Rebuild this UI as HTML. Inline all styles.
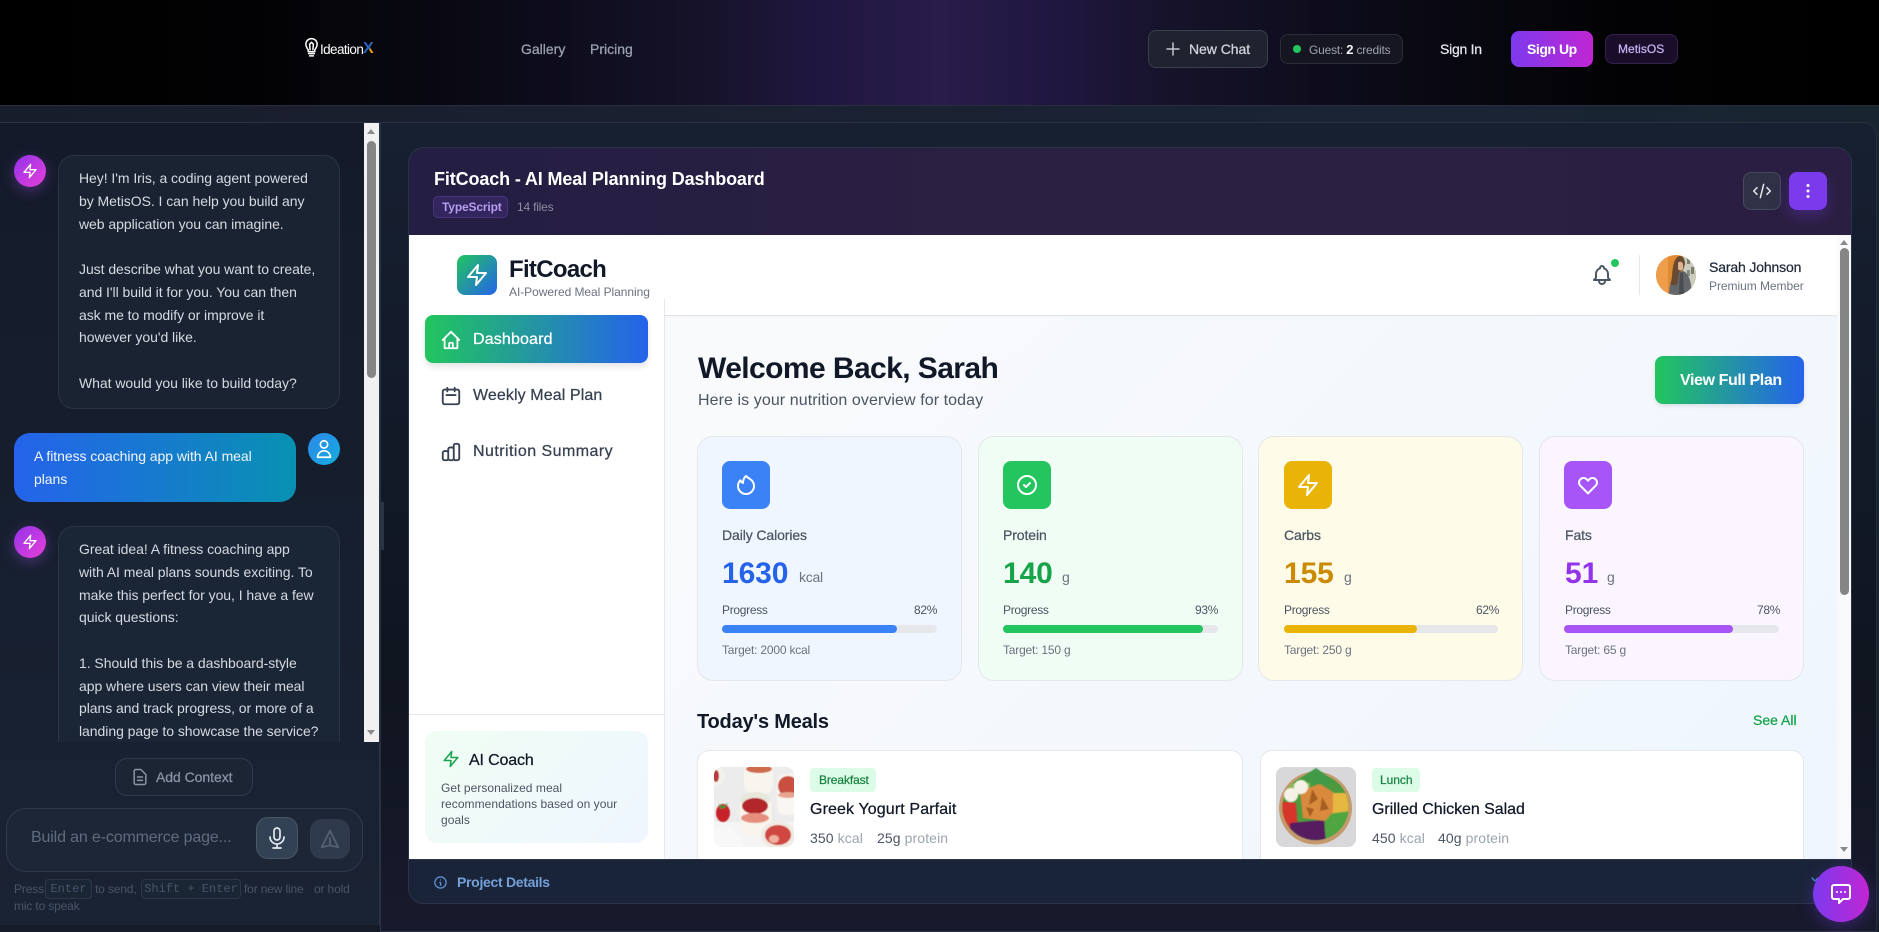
<!DOCTYPE html>
<html lang="en"><head><meta charset="utf-8"><title>FitCoach</title>
<style>
*{box-sizing:border-box;margin:0;padding:0}
html,body{width:1879px;height:925px;overflow:hidden;background:#161c2a;font-family:"Liberation Sans",sans-serif}
.a{position:absolute}
.t{position:absolute;white-space:nowrap;line-height:20px;letter-spacing:-.25px}
.w{-webkit-text-stroke:.25px currentColor}
svg{position:absolute;fill:none;stroke:currentColor;stroke-width:2;stroke-linecap:round;stroke-linejoin:round}
.m{font-size:14px;color:#d5dae2;line-height:22.75px;letter-spacing:-.05px;position:absolute;left:79px;white-space:pre}
.card{position:absolute;top:436px;height:245px;width:265px;border-radius:16px;border:1px solid #e5e7eb}
.ic{position:absolute;top:461px;width:48px;height:48px;border-radius:8px}
.lab{font-size:14px;color:#4b5563;top:525px;letter-spacing:-.1px;-webkit-text-stroke:.25px currentColor}
.val{font-size:30px;font-weight:700;top:564px;letter-spacing:-.1px}
.unit{font-size:14px;color:#6b7280;top:567px}
.s{font-size:12px;color:#4b5563;letter-spacing:-.3px}
.tg{font-size:12px;color:#6b7280;letter-spacing:-.2px;top:640px}
.track{position:absolute;top:625px;height:8px;border-radius:4px;background:#e5e7eb}
.fill{position:absolute;left:0;top:0;height:8px;border-radius:4px}
.kbd{position:absolute;top:879px;height:20px;border:1px solid #2c3747;border-radius:4px;background:#1b2635;font:12px/18px "Liberation Mono",monospace;color:#475569;text-align:center}
.nav{font-size:16px;color:#374151;left:473px;-webkit-text-stroke:.25px currentColor}
.h{font-size:12px;color:#475569;letter-spacing:-.15px}
</style></head><body>

<!-- top bar -->
<div class="a" style="left:0;top:0;width:1879px;height:105px;background:linear-gradient(90deg,#000 0,#020204 13%,#06060c 19%,#0b0a16 26%,#100e20 32%,#17132b 38%,#201741 44%,#281c4a 50%,#201741 56%,#17132b 62%,#100e20 68%,#0b0a16 74%,#06060c 81%,#020204 87%,#000 100%)"></div>
<div class="a" style="left:0;top:105px;width:1879px;height:1px;background:#2a2d3e"></div>

<!-- logo -->
<svg style="left:304px;top:36px;color:#fff;stroke-width:1.6" width="15" height="22" viewBox="0 0 16 22"><path d="M4.5 14C3 12 2 10.500 2 8a6 6 0 0 1 12 0c0 2.500-1 4-2.500 6v2h-7zM5 18h6M6 20.500h4M6.500 14 6 8M9.500 14 10 8M6 8l2-2 2 2"/></svg>
<div class="t" style="left:320px;top:40px;font-size:13.500px;color:#fff;letter-spacing:-.6px">Ideation</div>
<div class="t" style="left:363px;top:39px;font-size:16px;font-weight:700;letter-spacing:0;background:linear-gradient(115deg,#2563c8 0 52%,#f59e0b 60%);-webkit-background-clip:text;background-clip:text;color:transparent">X</div>

<div class="t w" style="left:521px;top:39px;font-size:14px;color:#9ca3af;letter-spacing:0">Gallery</div>
<div class="t w" style="left:590px;top:39px;font-size:14px;color:#9ca3af;letter-spacing:0">Pricing</div>

<div class="a" style="left:1148px;top:30px;width:120px;height:38px;border-radius:8px;border:1px solid #3a3f4e;background:#20222f"></div>
<svg style="left:1165px;top:41px;color:#c3c6ce;stroke-width:1.500" width="16" height="16" viewBox="0 0 16 16"><path d="M8 2v12M2 8h12"/></svg>
<div class="t w" style="left:1189px;top:39px;font-size:14px;color:#d1d5db;letter-spacing:-.05px">New Chat</div>

<div class="a" style="left:1280px;top:34px;width:123px;height:30px;border-radius:8px;border:1px solid #2a2d3a;background:#151622"></div>
<div class="a" style="left:1293px;top:45px;width:8px;height:8px;border-radius:50%;background:#22c55e"></div>
<div class="t" style="left:1309px;top:40px;font-size:12px;color:#9ca3af;letter-spacing:-.2px">Guest: <b style="color:#f3f4f6;font-size:13px">2</b> credits</div>

<div class="t w" style="left:1440px;top:39px;font-size:14px;color:#e5e7eb">Sign In</div>
<div class="a" style="left:1511px;top:31px;width:82px;height:36px;border-radius:8px;background:linear-gradient(90deg,#7c3aed,#c026d3)"></div>
<div class="t" style="left:1527px;top:39px;font-size:14px;font-weight:700;color:#fff;letter-spacing:-.45px">Sign Up</div>
<div class="a" style="left:1605px;top:34px;width:73px;height:30px;border-radius:8px;border:1px solid #34214f;background:#1a0d2a"></div>
<div class="t w" style="left:1618px;top:39px;font-size:12px;color:#c4b0f0;letter-spacing:.05px">MetisOS</div>

<!-- body bg -->
<div class="a" style="left:0;top:106px;width:1879px;height:819px;background:linear-gradient(90deg,#181d2b,#1b2030 30%,#1a2435 75%,#18252f)"></div>

<!-- right panel outer -->
<div class="a" style="left:380px;top:122px;width:1497px;height:810px;border:1px solid #2a3142;border-right-color:#262d3c;border-radius:0 14px 0 0;background:linear-gradient(180deg,#172031 0,#121a28 40%,#10151f 70%,#171a2c 100%)"></div>

<!-- left panel -->
<div class="a" style="left:0;top:122px;width:380px;height:803px;background:linear-gradient(180deg,#141a29 0,#172030 60%,#1a2333 100%);border-right:1px solid #2a3142;border-top:1px solid #2a3142"></div>
<div class="a" style="left:380px;top:502px;width:4px;height:48px;background:#2b3444"></div>

<!-- chat -->
<div class="a" style="left:0;top:123px;width:364px;height:619px;overflow:hidden">
  <div class="a" style="left:58px;top:32px;width:282px;height:254px;border:1px solid #2b3443;border-radius:16px;background:#1a2332"></div>
  <div class="a" style="left:58px;top:403px;width:282px;height:400px;border:1px solid #2b3443;border-radius:16px;background:#1a2535"></div>
  <div class="a" style="left:14px;top:310px;width:282px;height:69px;border-radius:16px;background:linear-gradient(90deg,#2563eb,#0891b2)"></div>
</div>
<div class="a" style="left:14px;top:155px;width:32px;height:32px;border-radius:50%;background:linear-gradient(135deg,#9333ea,#e83fd8);box-shadow:0 4px 14px rgba(168,85,247,.35)"></div>
<svg style="left:22px;top:163px;color:#fff" width="16" height="16" viewBox="0 0 24 24"><polygon points="13 2 3 14 12 14 11 22 21 10 12 10 13 2"/></svg>
<div class="m" style="top:167px">Hey! I'm Iris, a coding agent powered
by MetisOS. I can help you build any
web application you can imagine.

Just describe what you want to create,
and I'll build it for you. You can then
ask me to modify or improve it
however you'd like.

What would you like to build today?</div>
<div class="m" style="left:34px;top:445px;color:#f2f6fb">A fitness coaching app with AI meal
plans</div>
<div class="a" style="left:308px;top:433px;width:32px;height:32px;border-radius:50%;background:linear-gradient(135deg,#2e86e8,#12aee0)"></div>
<svg style="left:313px;top:438px;color:#fff;stroke-width:1.800" width="22" height="22" viewBox="0 0 24 24"><path d="M16 7a4 4 0 11-8 0 4 4 0 018 0zM12 14a7 7 0 00-7 7h14a7 7 0 00-7-7z"/></svg>
<div class="a" style="left:14px;top:526px;width:32px;height:32px;border-radius:50%;background:linear-gradient(135deg,#9333ea,#e83fd8);box-shadow:0 4px 14px rgba(168,85,247,.35)"></div>
<svg style="left:22px;top:534px;color:#fff" width="16" height="16" viewBox="0 0 24 24"><polygon points="13 2 3 14 12 14 11 22 21 10 12 10 13 2"/></svg>
<div class="a" style="left:70px;top:538px;width:270px;height:204px;overflow:hidden"><div class="m" style="left:9px;top:0">Great idea! A fitness coaching app
with AI meal plans sounds exciting. To
make this perfect for you, I have a few
quick questions:

1. Should this be a dashboard-style
app where users can view their meal
plans and track progress, or more of a
landing page to showcase the service?</div></div>

<!-- chat scrollbar -->
<div class="a" style="left:364px;top:123px;width:15px;height:619px;background:#f1f1f1"></div>
<div class="a" style="left:367px;top:141px;width:9px;height:237px;border-radius:5px;background:#858585"></div>
<div class="a" style="left:367px;top:129px;width:0;height:0;border-left:4.500px solid transparent;border-right:4.500px solid transparent;border-bottom:5px solid #8a8a8a"></div>
<div class="a" style="left:367px;top:730px;width:0;height:0;border-left:4.500px solid transparent;border-right:4.500px solid transparent;border-top:5px solid #8a8a8a"></div>

<!-- composer -->
<div class="a" style="left:115px;top:758px;width:138px;height:38px;border:1px solid #2f3a4a;border-radius:12px;background:#1b2534"></div>
<svg style="left:130px;top:767px;color:#8b95a5;stroke-width:1.800" width="20" height="20" viewBox="0 0 24 24"><path d="M9 12h6m-6 4h6m2 5H7a2 2 0 01-2-2V5a2 2 0 012-2h5.586a1 1 0 01.707.293l5.414 5.414a1 1 0 01.293.707V19a2 2 0 01-2 2z"/></svg>
<div class="t w" style="left:156px;top:767px;font-size:14px;color:#8b95a5;letter-spacing:-.05px">Add Context</div>
<div class="a" style="left:6px;top:808px;width:357px;height:64px;border:1px solid #2f3a4a;border-radius:20px;background:#1c2636"></div>
<div class="t" style="left:31px;top:828px;font-size:16px;color:#5f6c80;letter-spacing:-.15px">Build an e-commerce page...</div>
<div class="a" style="left:256px;top:817px;width:42px;height:42px;border:1px solid #4a5566;border-radius:12px;background:#334155"></div>
<svg style="left:265px;top:826px;color:#e2e8f0;stroke-width:1.700" width="24" height="24" viewBox="0 0 24 24"><path d="M19 11a7 7 0 01-7 7m0 0a7 7 0 01-7-7m7 7v4m0 0H8m4 0h4m-4-8a3 3 0 01-3-3V5a3 3 0 116 0v6a3 3 0 01-3 3z"/></svg>
<div class="a" style="left:310px;top:819px;width:40px;height:40px;border-radius:12px;background:#2f3b4d"></div>
<svg style="left:319px;top:828px;color:#556173" width="22" height="22" viewBox="0 0 24 24"><path d="M12 19l9 2-9-18-9 18 9-2zm0 0v-8"/></svg>
<div class="t h" style="left:14px;top:879px">Press</div>
<div class="kbd" style="left:45px;width:47px">Enter</div>
<div class="t h" style="left:95px;top:879px">to send,</div>
<div class="kbd" style="left:141px;width:100px">Shift + Enter</div>
<div class="t h" style="left:244px;top:879px">for new line</div>
<div class="t h" style="left:314px;top:879px">or hold</div>
<div class="t h" style="left:14px;top:896px">mic to speak</div>

<!-- project card -->
<div class="a" style="left:408px;top:147px;width:1444px;height:757px;border:1px solid #2d3346;border-radius:16px;background:#1a2438"></div>
<div class="a" style="left:409px;top:148px;width:1442px;height:87px;border-radius:15px 15px 0 0;background:linear-gradient(90deg,#241e43,#2b2042 50%,#2a1f42)"></div>
<div class="t" style="left:434px;top:169px;font-size:18px;font-weight:700;color:#fff;letter-spacing:-.13px">FitCoach - AI Meal Planning Dashboard</div>
<div class="a" style="left:433px;top:196px;width:75px;height:22px;border-radius:5px;border:1px solid #47357c;background:#33265e"></div>
<div class="t" style="left:442px;top:197px;font-size:12px;font-weight:600;color:#b79df0;letter-spacing:-.15px">TypeScript</div>
<div class="t" style="left:517px;top:197px;font-size:12px;color:#8c8ea3;letter-spacing:-.2px">14 files</div>
<div class="a" style="left:1743px;top:172px;width:38px;height:38px;border-radius:8px;border:1px solid #454a5e;background:#2f3146"></div>
<svg style="left:1752px;top:181px;color:#e5e7eb;stroke-width:1.800" width="20" height="20" viewBox="0 0 24 24"><path d="M10 20l4-16m4 4l4 4-4 4M6 16l-4-4 4-4"/></svg>
<div class="a" style="left:1789px;top:172px;width:38px;height:38px;border-radius:8px;background:#7c3aed;box-shadow:0 6px 14px rgba(124,58,237,.3)"></div>
<svg style="left:1800px;top:183px;color:#fff;fill:#fff;stroke-width:1" width="16" height="16" viewBox="0 0 16 16"><circle cx="8" cy="2.500" r="1"/><circle cx="8" cy="8" r="1"/><circle cx="8" cy="13.500" r="1"/></svg>

<!-- app -->
<div class="a" style="left:409px;top:235px;width:1442px;height:624px;background:#fff;overflow:hidden"></div>
<div class="a" style="left:665px;top:315px;width:1172px;height:544px;background:linear-gradient(135deg,#f9fafb,#eff6ff);border-top:1px solid #e8eaee"></div>
<div class="a" style="left:664px;top:299px;width:1px;height:560px;background:#e5e7eb"></div>
<div class="a" style="left:409px;top:714px;width:255px;height:1px;background:#e5e7eb"></div>
<div class="a" style="left:665px;top:315px;width:1172px;height:3px;background:linear-gradient(180deg,rgba(0,0,0,.03),transparent)"></div>

<div class="a" style="left:457px;top:255px;width:40px;height:40px;border-radius:8px;background:linear-gradient(135deg,#22c55e 0,#2563eb 100%)"></div>
<svg style="left:465px;top:263px;color:#fff" width="24" height="24" viewBox="0 0 24 24"><polygon points="13 2 3 14 12 14 11 22 21 10 12 10 13 2"/></svg>
<div class="t" style="left:509px;top:258px;font-size:24px;line-height:24px;font-weight:700;color:#111827;letter-spacing:-.7px">FitCoach</div>
<div class="t" style="left:509px;top:282px;font-size:12px;color:#6b7280;letter-spacing:-.05px">AI-Powered Meal Planning</div>

<svg style="left:1590px;top:263px;color:#4b5563" width="24" height="24" viewBox="0 0 24 24"><path d="M15 17h5l-1.405-1.405A2.032 2.032 0 0118 14.158V11a6.002 6.002 0 00-4-5.659V5a2 2 0 10-4 0v.341C7.670 6.165 6 8.388 6 11v3.159c0 .538-.214 1.055-.595 1.436L4 17h5m6 0v1a3 3 0 11-6 0v-1m6 0H9"/></svg>
<div class="a" style="left:1611px;top:259px;width:8px;height:8px;border-radius:50%;background:#22c55e"></div>
<div class="a" style="left:1639px;top:255px;width:1px;height:40px;background:#e5e7eb"></div>
<svg style="left:1656px;top:255px;stroke:none" width="40" height="40" viewBox="0 0 40 40"><defs><clipPath id="cav"><circle cx="20" cy="20" r="20"/></clipPath></defs><g clip-path="url(#cav)"><rect width="40" height="40" fill="#e08a32"/><rect width="12" height="40" fill="#ee9e4a"/><rect x="27" width="13" height="40" fill="#c9ccbe"/><rect x="31" y="3" width="3" height="6" fill="#77826f"/><rect x="35" y="12" width="3" height="7" fill="#77826f"/><rect x="31" y="15" width="3" height="6" fill="#8a8f7f"/>
<path d="M13 40c0-10 3-21 9-23l5-1c6 2 8 10 9 24z" fill="#63666b"/>
<path d="M15 30c1-8 1-12 2-18 1-7 4-11 7-11s5 3 5 8l-2 6-4 2-2 13z" fill="#6a4a30"/>
<path d="M22 8c1-2 4-2 5 1v5c-1 2-4 2-5 0z" fill="#dcb393"/>
<path d="M23 40l1-22 3-1 1 23z" fill="#4a4c50"/></g></svg>
<div class="t w" style="left:1709px;top:257px;font-size:14px;color:#1f2937;letter-spacing:-.15px">Sarah Johnson</div>
<div class="t" style="left:1709px;top:276px;font-size:12px;color:#6b7280;letter-spacing:-.05px">Premium Member</div>

<!-- sidebar -->
<div class="a" style="left:425px;top:315px;width:223px;height:48px;border-radius:8px;background:linear-gradient(90deg,#22c55e,#2563eb);box-shadow:0 4px 6px rgba(0,0,0,.1)"></div>
<svg style="left:440px;top:329px;color:#fff" width="22" height="22" viewBox="0 0 24 24"><path d="M3 12l2-2m0 0l7-7 7 7M5 10v10a1 1 0 001 1h3m10-11l2 2m-2-2v10a1 1 0 01-1 1h-3m-6 0a1 1 0 001-1v-4a1 1 0 011-1h2a1 1 0 011 1v4a1 1 0 001 1m-6 0h6"/></svg>
<div class="t nav" style="top:330px;color:#fff;letter-spacing:.15px">Dashboard</div>
<svg style="left:440px;top:385px;color:#374151" width="22" height="22" viewBox="0 0 24 24"><path d="M8 7V3m8 4V3m-9 8h10M5 21h14a2 2 0 002-2V7a2 2 0 00-2-2H5a2 2 0 00-2 2v12a2 2 0 002 2z"/></svg>
<div class="t nav" style="top:386px;letter-spacing:.1px">Weekly Meal Plan</div>
<svg style="left:440px;top:441px;color:#374151" width="22" height="22" viewBox="0 0 24 24"><path d="M9 19v-6a2 2 0 00-2-2H5a2 2 0 00-2 2v6a2 2 0 002 2h2a2 2 0 002-2zm0 0V9a2 2 0 012-2h2a2 2 0 012 2v10m-6 0a2 2 0 002 2h2a2 2 0 002-2m0 0V5a2 2 0 012-2h2a2 2 0 012 2v14a2 2 0 01-2 2h-2a2 2 0 01-2-2z"/></svg>
<div class="t nav" style="top:442px;letter-spacing:.45px">Nutrition Summary</div>

<div class="a" style="left:425px;top:731px;width:223px;height:112px;border-radius:12px;background:linear-gradient(135deg,#f0fdf4,#eff6ff)"></div>
<svg style="left:442px;top:750px;color:#16a34a" width="18" height="18" viewBox="0 0 24 24"><polygon points="13 2 3 14 12 14 11 22 21 10 12 10 13 2"/></svg>
<div class="t w" style="left:469px;top:751px;font-size:16px;color:#111827;letter-spacing:-.15px">AI Coach</div>
<div class="t" style="left:441px;top:780px;font-size:12px;line-height:16px;color:#4b5563;letter-spacing:.05px">Get personalized meal<br>recommendations based on your<br>goals</div>

<!-- main -->
<div class="t" style="left:698px;top:351px;font-size:30px;line-height:36px;font-weight:700;color:#111827;letter-spacing:-.58px">Welcome Back, Sarah</div>
<div class="t" style="left:698px;top:391px;font-size:16px;color:#4b5563;letter-spacing:.08px">Here is your nutrition overview for today</div>
<div class="a" style="left:1655px;top:356px;width:149px;height:48px;border-radius:8px;background:linear-gradient(90deg,#22c55e,#2563eb);box-shadow:0 2px 4px rgba(0,0,0,.1)"></div>
<div class="t" style="left:1680px;top:371px;font-size:16px;font-weight:600;color:#fff;letter-spacing:-.4px">View Full Plan</div>

<!-- stat cards -->
<div class="card" style="left:697px;background:#eff6ff"></div>
<div class="ic" style="left:722px;background:#3b82f6"></div>
<svg style="left:734px;top:473px;color:#fff" width="24" height="24" viewBox="0 0 24 24"><path d="M17.657 18.657A8 8 0 016.343 7.343S7 9 9 10c0-2 .5-5 2.986-7C14 5 16.090 5.777 17.656 7.343A7.975 7.975 0 0120 13a7.975 7.975 0 01-2.343 5.657z"/></svg>
<div class="t lab" style="left:722px">Daily Calories</div>
<div class="t val" style="left:722px;color:#2563eb">1630</div>
<div class="t unit" style="left:799px">kcal</div>
<div class="t s" style="left:722px;top:600px">Progress</div>
<div class="t s" style="left:914px;top:600px">82%</div>
<div class="track" style="left:722px;width:215px"><div class="fill" style="width:175px;background:#3b82f6"></div></div>
<div class="t tg" style="left:722px">Target: 2000 kcal</div>

<div class="card" style="left:978px;background:#f0fdf4"></div>
<div class="ic" style="left:1003px;background:#22c55e"></div>
<svg style="left:1015px;top:473px;color:#fff" width="24" height="24" viewBox="0 0 24 24"><path d="M9 12l2 2 4-4m6 2a9 9 0 11-18 0 9 9 0 0118 0z"/></svg>
<div class="t lab" style="left:1003px">Protein</div>
<div class="t val" style="left:1003px;color:#16a34a">140</div>
<div class="t unit" style="left:1062px">g</div>
<div class="t s" style="left:1003px;top:600px">Progress</div>
<div class="t s" style="left:1195px;top:600px">93%</div>
<div class="track" style="left:1003px;width:215px"><div class="fill" style="width:200px;background:#22c55e"></div></div>
<div class="t tg" style="left:1003px">Target: 150 g</div>

<div class="card" style="left:1258px;background:#fefce8;width:265px"></div>
<div class="ic" style="left:1284px;background:#eab308"></div>
<svg style="left:1296px;top:473px;color:#fff" width="24" height="24" viewBox="0 0 24 24"><polygon points="13 2 3 14 12 14 11 22 21 10 12 10 13 2"/></svg>
<div class="t lab" style="left:1284px">Carbs</div>
<div class="t val" style="left:1284px;color:#ca8a04">155</div>
<div class="t unit" style="left:1344px">g</div>
<div class="t s" style="left:1476px;top:600px">62%</div>
<div class="t s" style="left:1284px;top:600px">Progress</div>
<div class="track" style="left:1284px;width:214px"><div class="fill" style="width:133px;background:#eab308"></div></div>
<div class="t tg" style="left:1284px">Target: 250 g</div>

<div class="card" style="left:1539px;background:#faf5ff"></div>
<div class="ic" style="left:1564px;background:#a855f7"></div>
<svg style="left:1576px;top:473px;color:#fff" width="24" height="24" viewBox="0 0 24 24"><path d="M4.318 6.318a4.500 4.500 0 000 6.364L12 20.364l7.682-7.682a4.500 4.500 0 00-6.364-6.364L12 7.636l-1.318-1.318a4.500 4.500 0 00-6.364 0z"/></svg>
<div class="t lab" style="left:1565px">Fats</div>
<div class="t val" style="left:1565px;color:#9333ea">51</div>
<div class="t unit" style="left:1607px">g</div>
<div class="t s" style="left:1565px;top:600px">Progress</div>
<div class="t s" style="left:1757px;top:600px">78%</div>
<div class="track" style="left:1564px;width:215px"><div class="fill" style="width:169px;background:#a855f7"></div></div>
<div class="t tg" style="left:1565px">Target: 65 g</div>

<!-- meals -->
<div class="t" style="left:697px;top:711px;font-size:20px;line-height:22px;font-weight:700;color:#111827;letter-spacing:-.2px">Today's Meals</div>
<div class="t w" style="left:1753px;top:710px;font-size:14px;color:#16a34a;letter-spacing:0">See All</div>

<div class="a" style="left:697px;top:750px;width:1107px;height:109px;overflow:hidden">
  <div class="a" style="left:0;top:0;width:546px;height:130px;background:#fff;border:1px solid #e5e7eb;border-radius:12px"></div>
  <div class="a" style="left:563px;top:0;width:544px;height:130px;background:#fff;border:1px solid #e5e7eb;border-radius:12px"></div>
</div>

<!-- parfait photo -->
<svg style="left:714px;top:767px;stroke:none" width="80" height="80" viewBox="0 0 80 80"><defs><clipPath id="c1"><rect width="80" height="80" rx="8"/></clipPath><filter id="b1"><feGaussianBlur stdDeviation=".5"/></filter></defs><g clip-path="url(#c1)"><rect width="80" height="80" fill="#ececec"/><rect y="55" width="80" height="25" fill="#f5f5f5"/>
<g filter="url(#b1)">
<circle cx="1" cy="9" r="10" fill="#f4f2ec"/><ellipse cx="2" cy="9" rx="3" ry="6" fill="#b8373a"/>
<rect x="30" y="-6" width="29" height="33" rx="10" fill="#f7f5ee"/><ellipse cx="45" cy="2" rx="13" ry="4" fill="#cf6a4c"/>
<rect x="63" y="7" width="22" height="41" rx="9" fill="#f9f7f1"/><ellipse cx="74" cy="19" rx="10" ry="10" fill="#c9503f"/><ellipse cx="74" cy="28" rx="10" ry="3" fill="#e7a48f"/>
<ellipse cx="9" cy="46" rx="7" ry="9" fill="#c7242a"/><path d="M5 37l4 2 5-3-3 5-5 1z" fill="#4d8a3d"/>
<rect x="26" y="25" width="31" height="44" rx="13" fill="#f8f5ec"/><ellipse cx="41" cy="33" rx="15" ry="8" fill="#e9e6dc"/><ellipse cx="41" cy="39" rx="13" ry="8" fill="#b3262a"/><ellipse cx="41" cy="51" rx="14" ry="5" fill="#e68f7e"/>
<ellipse cx="64" cy="68" rx="17" ry="14" fill="#efeae2"/><ellipse cx="64" cy="68" rx="13" ry="10" fill="#cf4641"/><ellipse cx="60" cy="72" rx="5" ry="4" fill="#efb0a0"/>
<path d="M0 62c10-4 18 0 26 8l2 10H0z" fill="#f8f8f8"/></g>
</g></svg>
<div class="a" style="left:810px;top:768px;width:66px;height:24px;border-radius:4px;background:#dcfce7"></div>
<div class="t" style="left:819px;top:770px;font-size:12px;color:#15803d;letter-spacing:-.1px;-webkit-text-stroke:.2px currentColor">Breakfast</div>
<div class="t w" style="left:810px;top:800px;font-size:16px;color:#111827;letter-spacing:.12px">Greek Yogurt Parfait</div>
<div class="t" style="left:810px;top:828px;font-size:14px;color:#4b5563;letter-spacing:.1px">350 <span style="color:#9ca3af">kcal</span></div>
<div class="t" style="left:877px;top:828px;font-size:14px;color:#4b5563;letter-spacing:.1px">25g <span style="color:#9ca3af">protein</span></div>

<!-- salad photo -->
<svg style="left:1276px;top:767px;stroke:none" width="80" height="80" viewBox="0 0 80 80"><defs><clipPath id="c2"><rect width="80" height="80" rx="8"/></clipPath><clipPath id="c3"><circle cx="39.500" cy="40" r="33"/></clipPath><filter id="b2"><feGaussianBlur stdDeviation=".5"/></filter></defs><g clip-path="url(#c2)"><rect width="80" height="80" fill="#d8d8db"/><circle cx="39.500" cy="41" r="36.500" fill="#c49a6c"/><circle cx="39.500" cy="40" r="33" fill="#4f9a3e"/>
<g filter="url(#b2)"><path d="M26 10l14-9 10 7 8 8-18 4z" fill="#3f9a47"/>
<g clip-path="url(#c3)">
<path d="M8 16h26v12H8z" fill="#8cbf5a"/>
<rect x="52" y="26" width="22" height="22" fill="#e7b840"/>
<path d="M50 47l24-3v30H48z" fill="#4fa63f"/>
<path d="M2 34l18 2 2 28H2z" fill="#d8352a"/>
<path d="M14 56l34-3 2 22H14z" fill="#571c5e"/>
<path d="M24 24l20-7 13 8v20l-8 9-22-3z" fill="#d98a3e"/>
<path d="M36 22l6 10-9 6zM46 30l7 12-9 2zM30 40l8 2-4 8z" fill="#a65d23"/>
</g>
<circle cx="25" cy="20" r="7" fill="#f4f2e6"/><circle cx="15" cy="28" r="7" fill="#f4f2e6"/></g></g></svg>
<div class="a" style="left:1372px;top:768px;width:48px;height:24px;border-radius:4px;background:#dcfce7"></div>
<div class="t" style="left:1380px;top:770px;font-size:12px;color:#15803d;letter-spacing:-.05px;-webkit-text-stroke:.2px currentColor">Lunch</div>
<div class="t w" style="left:1372px;top:800px;font-size:16px;color:#111827;letter-spacing:-.05px">Grilled Chicken Salad</div>
<div class="t" style="left:1372px;top:828px;font-size:14px;color:#4b5563;letter-spacing:.1px">450 <span style="color:#9ca3af">kcal</span></div>
<div class="t" style="left:1438px;top:828px;font-size:14px;color:#4b5563;letter-spacing:.1px">40g <span style="color:#9ca3af">protein</span></div>

<!-- main scrollbar -->
<div class="a" style="left:1837px;top:235px;width:14px;height:624px;background:#f8f9fa"></div>
<div class="a" style="left:1840px;top:248px;width:9px;height:347px;border-radius:5px;background:#858585"></div>
<div class="a" style="left:1840px;top:240px;width:0;height:0;border-left:4.500px solid transparent;border-right:4.500px solid transparent;border-bottom:5px solid #8a8a8a"></div>
<div class="a" style="left:1840px;top:847px;width:0;height:0;border-left:4.500px solid transparent;border-right:4.500px solid transparent;border-top:5px solid #8a8a8a"></div>

<!-- footer -->
<div class="a" style="left:409px;top:859px;width:1442px;height:1px;background:#2c3446"></div>
<svg style="left:433px;top:875px;color:#5f93d8" width="15" height="15" viewBox="0 0 24 24"><path d="M13 16h-1v-4h-1m1-4h.01M21 12a9 9 0 11-18 0 9 9 0 0118 0z"/></svg>
<div class="t" style="left:457px;top:872px;font-size:14px;font-weight:600;color:#74a0da;letter-spacing:-.3px">Project Details</div>
<svg style="left:1810px;top:876px;color:#3b82c4;stroke-width:1.500" width="10" height="10" viewBox="0 0 10 10"><path d="M2 2l3 3 3-3"/></svg>

<!-- chat fab -->
<div class="a" style="left:1813px;top:866px;width:56px;height:56px;border-radius:50%;background:linear-gradient(90deg,#7c3aed,#c026d3);box-shadow:0 4px 16px rgba(124,58,237,.35)"></div>
<svg style="left:1829px;top:882px;color:#fff" width="24" height="24" viewBox="0 0 24 24"><path d="M8 10h.01M12 10h.01M16 10h.01M10 17H5a2 2 0 01-2-2V5a2 2 0 012-2h14a2 2 0 012 2v10a2 2 0 01-2 2h-5l-4 4v-4z"/></svg>
</body></html>
